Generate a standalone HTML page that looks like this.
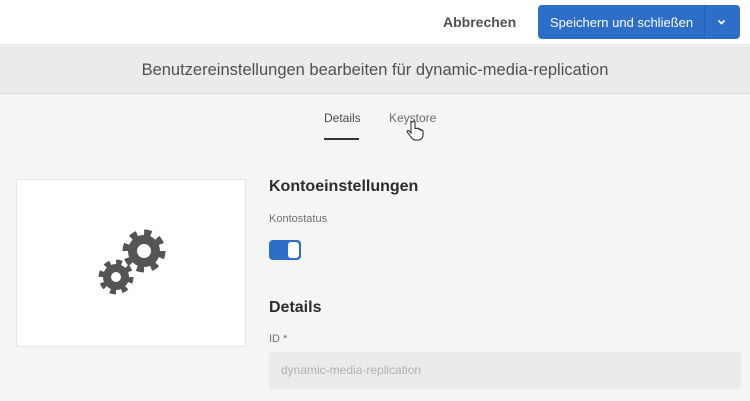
<!DOCTYPE html>
<html><head><meta charset="utf-8"><style>
*{margin:0;padding:0;box-sizing:border-box}
body{width:750px;height:401px;overflow:hidden;background:#f5f5f5;font-family:"Liberation Sans",sans-serif;position:relative;color:#4b4b4b}
.top{position:absolute;left:0;top:0;width:750px;height:45px;background:#fff;border-bottom:1px solid #e1e1e1}
.abb{position:absolute;left:443px;top:14px;font-size:14px;font-weight:bold;color:#505050}
.btn{position:absolute;left:538px;top:5px;width:202px;height:34px;background:#2d6ec9;border-radius:4px;color:#fff}
.btn span{position:absolute;left:12px;top:10px;font-size:13px;white-space:nowrap}
.btn i{position:absolute;left:166px;top:0;width:1px;height:34px;background:#2460b5}
.hdr{position:absolute;left:0;top:46px;width:750px;height:48px;background:#ebebeb;border-bottom:1px solid #dedede;text-align:center;font-size:16.5px;line-height:48px;color:#505050}
.tab{position:absolute;top:111px;font-size:12px;color:#4b4b4b}
.ul{position:absolute;left:324px;top:138px;width:35px;height:2px;background:#333}
.card{position:absolute;left:16px;top:179px;width:230px;height:168px;background:#fff;border:1px solid #e6e6e6}
h2{position:absolute;font-size:16px;font-weight:bold;color:#2c2c2c}
.lbl{position:absolute;font-size:11px;color:#707070}
.tog{position:absolute;left:269px;top:240px;width:32px;height:20px;background:#2d6ec9;border-radius:4px}
.tog b{position:absolute;right:2px;top:2px;width:11px;height:16px;background:#fff;border-radius:3px}
.inp{position:absolute;left:269px;top:352px;width:472px;height:37px;background:#ebebeb;border-radius:3px;font-size:12px;color:#b0b0b0;padding:11px 12px}
</style></head><body>
<div class="top"><div class="abb">Abbrechen</div>
<div class="btn"><span>Speichern und schließen</span><i></i>
<svg style="position:absolute;left:179px;top:14px" width="9" height="7" viewBox="0 0 9 7"><path d="M1.5 1.5L4.5 4.5L7.5 1.5" stroke="#fff" stroke-width="1.8" fill="none"/></svg></div></div>
<div class="hdr">Benutzereinstellungen bearbeiten für dynamic-media-replication</div>
<div class="tab" style="left:324px">Details</div>
<div class="tab" style="left:389px;color:#6a6a6a">Keystore</div>
<div class="ul"></div>
<svg style="position:absolute;left:406px;top:120px" width="20" height="24" viewBox="0 0 20 24"><path d="M5 2v11l-2-2c-1-1-2.5 0-1.7 1.2L5 17c1 2 2.5 3 5 3h2c3 0 5-2 5-5v-4c0-1-1.5-1.5-2 0v-1c0-1.2-1.8-1.2-2 0V9c0-1.2-1.8-1.2-2 0V9c0-1-2-1-2 0V2c0-1.3-2-1.3-2 0z" fill="#fff" stroke="#222" stroke-width="1"/></svg>
<div class="card"><svg width="230" height="168" viewBox="16 179 230 168">
<g fill="none" stroke="#555"><circle cx="143" cy="250" r="11.5" stroke-width="9"/><circle cx="143" cy="250" r="18.5" stroke-width="6" stroke-dasharray="7.26 7.26"/>
<circle cx="115" cy="276" r="9" stroke-width="8"/><circle cx="115" cy="276" r="15" stroke-width="5" stroke-dasharray="5.89 5.89"/></g></svg></div>
<h2 style="left:269px;top:178px">Kontoeinstellungen</h2>
<div class="lbl" style="left:269px;top:213px">Kontostatus</div>
<div class="tog"><b></b></div>
<h2 style="left:269px;top:299px">Details</h2>
<div class="lbl" style="left:269px;top:333px">ID *</div>
<div class="inp">dynamic-media-replication</div>
</body></html>
